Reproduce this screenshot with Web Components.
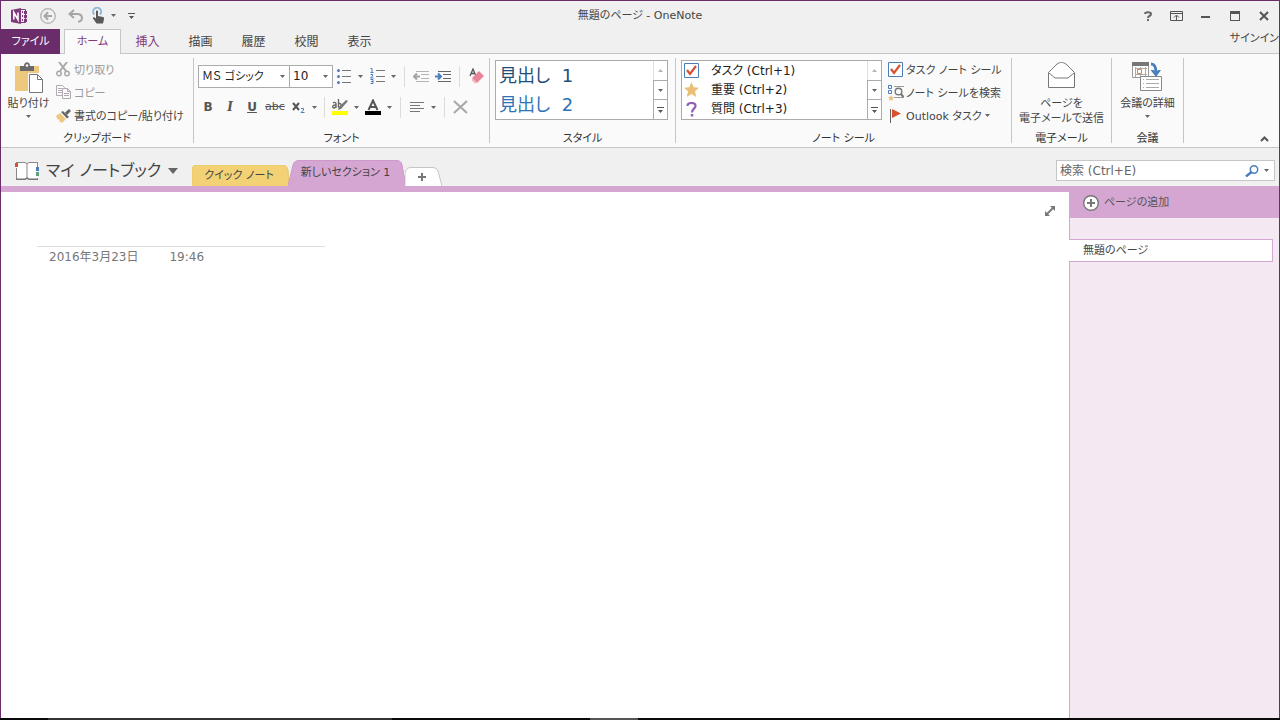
<!DOCTYPE html>
<html lang="ja">
<head>
<meta charset="utf-8">
<title>無題のページ - OneNote</title>
<style>
  html, body { margin: 0; height: 100%; }
  body {
    font: 12px/16px "DejaVu Sans", "Noto Sans CJK JP", sans-serif;
    font-feature-settings: "palt";
    color: #444;
    --accent: #6b2c6b;
    --section: #d5a6d2;
    --line: #c6c6c6;
    --surface: #fafafa;
    --chrome: #f0f0f0;
    --small: 11px;
  }
</style>
</head>
<body>
<note-window></note-window>
<script>
const RESET = `
  * { box-sizing: border-box; }
  button, input, select {
    font: inherit; font-feature-settings: inherit; color: inherit;
    background: none; border: 0; margin: 0; padding: 0; border-radius: 0; outline: 0;
  }
  button { display: flex; align-items: center; white-space: nowrap; }
`;
function define(name, css, html) {
  customElements.define(name, class extends HTMLElement {
    constructor() {
      super();
      this.attachShadow({ mode: 'open' });
    }
    connectedCallback() {
      const body = typeof html === 'function' ? html(this) : html;
      this.shadowRoot.innerHTML = `<style>${RESET}${css}</style>${body}`;
    }
  });
}

/* Each entry: [width, height, markup] */
const ICONS = {
  logo: [17, 16, `<path fill="#80397b" d="M0 2 10 0v16L0 14z"/><path fill="none" stroke="#80397b" d="M10 1.500h4.500v13H10"/><path fill="#80397b" d="M11 3h1v2h-1zM11 7h1v2h-1zM11 11h1v2h-1zM13 3h3v3h-3zM13 7h3v3h-3zM13 11h3v3h-3z"/><path fill="none" stroke="#fff" stroke-width="1.600" d="M2.800 11.500v-7l4.200 7v-7"/>`],
  back: [16, 16, `<circle cx="8" cy="8" r="7.300" fill="none" stroke="#b1b1b1" stroke-width="1.300"/><path fill="none" stroke="#a6a6a6" stroke-width="2" d="M4.500 8H12M8 4.300 4.500 8 8 11.700"/>`],
  undo: [15, 14, `<path fill="none" stroke="#a6a6a6" stroke-width="2" d="M6 1 1.500 5 6 9M2 5h7c3 0 5 1.700 5 4s-1.500 3.500-4 3.800"/>`],
  touch: [13, 17, `<path fill="none" stroke="#8db7d9" stroke-width="2" d="M2.200 7.500A4 4 0 1 1 8 7.500"/><path fill="#595959" d="M4 4.500c0-1.300 2-1.300 2 0V9l5 1c1 .3 1.200 1 1 2l-1 4.500H4.500L1 11.500c-.5-1 .5-1.600 1.500-1L4 11.500z"/>`],
  caret: [5, 3, `<path fill="#666" d="M0 0h5L2.500 3z"/>`],
  bigcaret: [10, 6, `<path fill="#666" d="M0 0h10L5 6z"/>`],
  up: [5, 3, `<path fill="#b5b5b5" d="M0 3h5L2.500 0z"/>`],
  more: [7, 6, `<path fill="#555" d="M0 0h7v1H0zM1 3h5L3.500 6z"/>`],
  help: [8, 10, `<path fill="none" stroke="#666" stroke-width="2" d="M1 3C1 .500 7 .500 7 3S4 4.500 4 7"/><path fill="#666" d="M3 8h2v2H3z"/>`],
  ribbonopt: [13, 10, `<path fill="none" stroke="#555" d="M.5.5h12v9H.5zM0 2.500h13M6.500 9V5M4 6.500l2.500-2.500L9 6.500"/>`],
  minimize: [9, 10, `<path fill="#555" d="M0 5h9v2H0z"/>`],
  maximize: [10, 10, `<path fill="#555" d="M0 0h10v10H0zM1 3v6h8V3z" fill-rule="evenodd"/>`],
  close: [10, 10, `<path fill="none" stroke="#555" stroke-width="2" d="m1 1 8 8M9 1 1 9"/>`],
  paste: [30, 32, `<path fill="#edc87e" d="M1 4h24v25H1z"/><path fill="#fafafa" d="M14 11h12v18H14z"/><path fill="#6a6a6a" d="M6 4h4c0-5 6-5 6 0h4v5H6z"/><circle cx="13" cy="3.500" r="1.300" fill="#fafafa"/><path fill="#fff" stroke="#777" d="M15.500 12.500h8l5 5v13h-13zM23.500 12.500v5h5"/>`],
  cut: [14, 15, `<path fill="none" stroke="#a9a9a9" stroke-width="2" d="m3 0 7 9M11 0 4 9"/><circle cx="3" cy="11.500" r="2.300" fill="none" stroke="#a9a9a9" stroke-width="1.400"/><circle cx="11" cy="11.500" r="2.300" fill="none" stroke="#a9a9a9" stroke-width="1.400"/>`],
  copy: [16, 15, `<path fill="#fafafa" stroke="#b3a9b4" d="M.5.500h6l2 2v8h-8zM2 3.500h4M2 5.500h4M2 7.500h4"/><path fill="#fafafa" stroke="#b3a9b4" d="M6.500 3.500h5l3 3v7h-8zM11.500 3.500v3h3M8 8.500h5M8 10.500h5"/>`],
  painter: [16, 14, `<path fill="#edc87e" d="m0 7 4-3 6 6-4 4-3-2 1-2-2 1z"/><path fill="#666" d="m5 3 2-1 6 6-2 1.500zM9 3.500 13 0l2 2-4 4z"/>`],
  bullets: [14, 15, `<g fill="#4a7ebb"><circle cx="1.500" cy="1.500" r="1.500"/><circle cx="1.500" cy="7.500" r="1.500"/><circle cx="1.500" cy="13.500" r="1.500"/></g><path stroke="#777" d="M5 1.500h9M5 7.500h9M5 13.500h9"/>`],
  numbers: [15, 16, `<path stroke="#777" d="M6 2.500h9M6 8.500h9M6 13.500h9"/><path fill="none" stroke="#4a7ebb" d="M.5.500H2V4M.5 4.500h3M.5 6.500h2v1.500l-2 2h3M.5 11.500h2.500v4H.5M1 13.500h2"/>`],
  outdent: [16, 11, `<path stroke="#b5b5b5" d="M3 .500h13M8 3.500h8M8 7.500h8M3 10.500h13"/><path fill="none" stroke="#a5a5a5" stroke-width="2" d="M7 5.500H1M4 2.500l-3 3 3 3"/>`],
  indent: [16, 11, `<path stroke="#666" d="M3 .500h13M8 3.500h8M8 7.500h8M3 10.500h13"/><path fill="none" stroke="#4a7ebb" stroke-width="2" d="M0 5.500h6M3 2.500l3 3-3 3"/>`],
  eraser: [15, 16, `<path fill="none" stroke="#555" stroke-width="1.300" d="m1 8 3-7 2.500 6M2 5.500h4"/><path fill="#e8839a" d="m3 10 7-7 5 5-7 7z"/><path fill="#f3b4c1" d="m3 10 5 5-2 .5-3-3z"/>`],
  subscript: [13, 12, `<path fill="none" stroke="#555" stroke-width="2" d="m1 2 6 7M7 2 1 9"/><path fill="none" stroke="#4a7ebb" d="M9 7.500h2.500V9L9 11.500h3.500"/>`],
  highlight: [17, 16, `<path fill="none" stroke="#666" stroke-width="1.400" d="M1 4c1-1 3-1 3 1v4M4 6c-4-.5-4 3-2 3l2-1M6.500 0v8.500M6.500 5c3-2 4 3.500 0 3.500"/><path fill="#777" d="m14 1 2 1-7 8-3 1 1-3z"/><path fill="#ff0" d="M0 12h16v4H0z"/>`],
  fontcolor: [16, 16, `<path fill="none" stroke="#555" stroke-width="2" d="M3.500 11 8 1.500 12.500 11M5 8h6"/><path d="M0 12h16v4H0z"/>`],
  align: [14, 11, `<path stroke="#777" d="M0 .500h14M0 3.500h10M0 6.500h14M0 9.500h10"/>`],
  remove: [16, 14, `<path fill="none" stroke="#aaa" stroke-width="2.200" d="m1 1 13 12M14 1 1 13"/>`],
  check: [15, 15, `<path fill="#fff" stroke="#4a7ebb" d="M.5.500h14v14H.5z"/><path fill="none" stroke="#d8512f" stroke-width="2.200" d="m3 7 3 4 6-8"/>`],
  star: [15, 15, `<path fill="#e9bf78" d="m7.500 0 2.200 5.200 5.300.5-4 3.600 1.200 5.700-4.700-3-4.700 3L4 9.300 0 5.700l5.300-.5z"/>`],
  question: [15, 15, `<path fill="none" stroke="#8f60b5" stroke-width="2.200" d="M3.500 4c0-4 8-4 8 0 0 2.500-3.500 3-3.500 6.500"/><path fill="#8f60b5" d="M6.800 12h2.500v2.500H6.800z"/>`],
  find: [16, 16, `<path fill="#fafafa" stroke="#4a7ebb" d="M.5.500h3v3h-3zM.5 5.500h3v3h-3z"/><path stroke="#999" d="M6 1.500h10M6 12.500h10"/><circle cx="10.500" cy="6.500" r="3.300" fill="#fafafa" stroke="#777" stroke-width="1.400"/><path stroke="#777" stroke-width="2" d="m13 9 2.500 3"/><path fill="#e9bf78" d="m3 10 1 2h2l-1.500 1.500L5 16l-2-1.300L1 16l.5-2.500L0 12h2z"/>`],
  flag: [15, 14, `<path stroke="#666" d="M2.500 0v14"/><path fill="#d8512f" d="m4 0 9 4.500L4 9z"/>`],
  mail: [27, 26, `<path fill="#fff" stroke="#777" d="M.5 10.500 9 2c3-2 6-2 9 0l8.500 8.500v15H.5z"/><path fill="none" stroke="#777" d="m1 11 6 5h13l6-5"/>`],
  meeting: [31, 30, `<path fill="#fff" stroke="#999" d="M.5.500h16v15H.5z"/><path fill="#777" d="M0 0h17v4H0z"/><path stroke="#aaa" fill="none" d="M3 6.500h12M3 12.500h12M3.500 5v10M13.500 5v10M8.500 5v2M8.500 12v3"/><path fill="#fff" stroke="#d98444" d="M5.500 7.500h4v4h-4z"/><path fill="#fff" stroke="#888" d="M8.500 14.500h21v14h-21z"/><path stroke="#aaa" d="M14 17.500h13M14 21.500h13M14 25.500h13M11 17.500h1M11 21.500h1M11 25.500h1"/><path fill="none" stroke="#4a7ebb" stroke-width="3" d="M19 2c4 0 5 3 5 9"/><path fill="#4a7ebb" d="M18.500 8h3l2.500 2.500L26 8h3l-5 7z"/>`],
  collapse: [9, 6, `<path fill="none" stroke="#555" stroke-width="2" d="m1 5 3.500-3.500L8 5"/>`],
  book: [24, 20, `<path fill="#fff" d="M1 1h22v17H1z"/><path fill="none" stroke="#888" d="M1 1.500h9l2 1 2-1h8M1.500 7v11.500M22.500 1v5M12 2v15M22.500 17v1.500"/><path fill="none" stroke="#777" stroke-width="1.500" d="M1 18.200h9l2-1 2 1h9"/><path fill="#d8512f" d="M0 2h3v4H0z"/><path fill="#4a7ebb" d="M21 6h3v4h-3z"/><path fill="#5fa080" d="M21 11h3v4h-3z"/>`],
  plus: [8, 8, `<path stroke="#777" stroke-width="2" d="M4 0v8M0 4h8"/>`],
  search: [14, 12, `<circle cx="9" cy="4.500" r="3.700" fill="none" stroke="#4a7ebb" stroke-width="1.500"/><path stroke="#4a7ebb" stroke-width="2.400" d="m6.500 7-5.500 4.500"/>`],
  add: [16, 16, `<circle cx="8" cy="8" r="7.300" fill="#fff" stroke="#777" stroke-width="1.400"/><path stroke="#777" stroke-width="2" d="M8 4v8M4 8h8"/>`],
  expand: [12, 12, `<path stroke="#777" stroke-width="1.800" d="m2 10 8-8"/><path fill="#777" d="M6 1h5v5L9 4 8 3zM1 6v5h5L4 9 3 8z"/>`]
};
define('ui-icon', `:host { display: inline-flex; flex: none; } svg { display: block; }`, el => {
  const [w, h, art] = ICONS[el.getAttribute('name')];
  return `<svg width="${w}" height="${h}" viewBox="0 0 ${w} ${h}" aria-hidden="true">${art}</svg>`;
});

define('title-bar', `
  :host { display: grid; grid-template-columns: 1fr auto 1fr; align-items: center; height: 29px; margin-bottom: -1px; flex: none; }
  .quick { display: flex; align-items: center; gap: 12px; padding-left: 10px; }
  .touch { gap: 6px; margin-left: -3px; }
  .name { font-size: var(--small); }
  .window { display: flex; justify-content: flex-end; padding-right: 1px; }
  .window button { width: 29px; height: 28px; justify-content: center; }
`, `
  <div class="quick">
    <ui-icon name="logo"></ui-icon>
    <button aria-label="戻る"><ui-icon name="back"></ui-icon></button>
    <button aria-label="元に戻す"><ui-icon name="undo"></ui-icon></button>
    <button class="touch" aria-label="タッチ モード"><ui-icon name="touch"></ui-icon><ui-icon name="caret"></ui-icon></button>
    <button aria-label="カスタマイズ"><ui-icon name="more"></ui-icon></button>
  </div>
  <div class="name">無題のページ - OneNote</div>
  <div class="window">
    <button aria-label="ヘルプ"><ui-icon name="help"></ui-icon></button>
    <button aria-label="リボンの表示オプション"><ui-icon name="ribbonopt"></ui-icon></button>
    <button aria-label="最小化"><ui-icon name="minimize"></ui-icon></button>
    <button aria-label="最大化"><ui-icon name="maximize"></ui-icon></button>
    <button aria-label="閉じる"><ui-icon name="close"></ui-icon></button>
  </div>`);

define('ribbon-tabs', `
  :host { display: flex; height: 25px; flex: none; box-shadow: inset 0 -1px var(--line); }
  button { width: 53px; justify-content: center; }
  .file { width: 59px; margin-right: 4px; background: var(--accent); color: #fff; }
  .on { width: 57px; background: var(--surface); border: 1px solid var(--line); border-bottom: 0; }
  .file, .on, a { font-size: var(--small); }
  .on, .hot { color: #80397b; }
  a { margin-left: auto; color: inherit; text-decoration: none; line-height: 20px; }
`, `
  <button class="file">ファイル</button>
  <button class="on">ホーム</button>
  <button class="hot">挿入</button>
  <button>描画</button>
  <button>履歴</button>
  <button>校閲</button>
  <button>表示</button>
  <a href="#signin">サインイン</a>`);

define('ribbon-group', `
  :host { display: flex; flex-direction: column; flex: none; margin: 4px 0; border-right: 1px solid var(--line); }
  .body { flex: 1; display: flex; min-height: 0; }
  .label { text-align: center; font-size: var(--small); line-height: 8px; color: #333; }
`, el => `<div class="body"><slot></slot></div><div class="label">${el.getAttribute('label')}</div>`);

define('big-button', `
  :host { display: flex; flex: 1; justify-content: center; align-items: flex-start; }
  button { flex-direction: column; padding-top: 4px; width: 100%; }
  .art { height: 34px; display: flex; align-items: flex-start; }
  .text { font-size: var(--small); line-height: 15px; }
  .caret { margin-top: 4px; }
`, el => `<button><span class="art"><ui-icon name="${el.getAttribute('icon')}"></ui-icon></span>
  <span class="text"><slot></slot></span>${el.hasAttribute('menu') ? '<ui-icon class="caret" name="caret"></ui-icon>' : ''}</button>`);

define('row-button', `
  :host { display: flex; height: 23px; font-size: var(--small); }
  :host([disabled]) { color: #999; }
  .art { width: 18px; display: flex; flex: none; }
  .text { padding-top: 2px; }
  .caret { margin-left: 3px; }
`, el => `<button ${el.hasAttribute('disabled') ? 'disabled' : ''}><span class="art"><ui-icon name="${el.getAttribute('icon')}"></ui-icon></span>
  <span class="text"><slot></slot></span>${el.hasAttribute('menu') ? '<ui-icon class="caret" name="caret"></ui-icon>' : ''}</button>`);

define('clipboard-tools', `
  :host { display: flex; flex: 1; }
  .paste { width: 55px; display: flex; }
  .rows { display: flex; flex-direction: column; }
`, `
  <div class="paste"><big-button icon="paste" menu>貼り付け</big-button></div>
  <div class="rows">
    <row-button icon="cut" disabled>切り取り</row-button>
    <row-button icon="copy" disabled>コピー</row-button>
    <row-button icon="painter">書式のコピー/貼り付け</row-button>
  </div>`);

define('font-tools', `
  :host { display: flex; flex-direction: column; flex: 1; padding: 6px 4px 0; }
  .row { display: flex; align-items: center; }
  .row.first { height: 24px; } .row.second { height: 38px; margin-left: -1px; }
  .combo { display: grid; align-items: center; height: 23px; border: 1px solid #ababab; background: #fff; color: #222; }
  .combo.size { margin-left: -1px; }
  .combo > * { grid-area: 1 / 1; }
  .combo ui-icon { justify-self: end; margin-right: 4px; pointer-events: none; }
  select { appearance: none; width: 100%; height: 21px; padding-left: 3px; }
  .name { width: 92px; } .name select { font-size: var(--small); padding-top: 1px; } .size { width: 44px; }
  button { justify-content: center; width: 22px; height: 22px; color: #555; }
  .drop { width: 11px; }
  .wide { width: 24px; }
  i.sep { width: 1px; height: 21px; background: #dcdcdc; margin: 0 5px; }
  .second i.sep { margin: 0 4px; }
  .second i.sep ~ i.sep { margin: 0 5px; }
  .b { font-weight: bold; } .i { font-style: italic; font-family: "DejaVu Serif", serif; font-weight: bold; }
  .u { text-decoration: underline; font-weight: bold; } .s { text-decoration: line-through; font-size: var(--small); }
`, `
  <div class="row first">
    <label class="combo name"><select aria-label="フォント"><option>ＭＳ ゴシック</option></select><ui-icon name="caret"></ui-icon></label>
    <label class="combo size"><select aria-label="フォント サイズ"><option>10</option></select><ui-icon name="caret"></ui-icon></label>
    <button aria-label="箇条書き"><ui-icon name="bullets"></ui-icon></button><button class="drop" aria-label="箇条書きの種類"><ui-icon name="caret"></ui-icon></button>
    <button aria-label="段落番号"><ui-icon name="numbers"></ui-icon></button><button class="drop" aria-label="番号の種類"><ui-icon name="caret"></ui-icon></button>
    <i class="sep"></i>
    <button aria-label="インデント解除"><ui-icon name="outdent"></ui-icon></button>
    <button aria-label="インデント"><ui-icon name="indent"></ui-icon></button>
    <i class="sep"></i>
    <button aria-label="書式のクリア"><ui-icon name="eraser"></ui-icon></button>
  </div>
  <div class="row second">
    <button class="b">B</button><button class="i">I</button><button class="u">U</button><button class="wide s">abc</button>
    <button aria-label="下付き"><ui-icon name="subscript"></ui-icon></button><button class="drop" aria-label="上付きと下付き"><ui-icon name="caret"></ui-icon></button>
    <i class="sep"></i>
    <button aria-label="蛍光ペン"><ui-icon name="highlight"></ui-icon></button><button class="drop" aria-label="蛍光ペンの色"><ui-icon name="caret"></ui-icon></button>
    <button aria-label="フォントの色"><ui-icon name="fontcolor"></ui-icon></button><button class="drop" aria-label="色の選択"><ui-icon name="caret"></ui-icon></button>
    <i class="sep"></i>
    <button aria-label="配置"><ui-icon name="align"></ui-icon></button><button class="drop" aria-label="配置の種類"><ui-icon name="caret"></ui-icon></button>
    <i class="sep"></i>
    <button aria-label="削除"><ui-icon name="remove"></ui-icon></button>
  </div>`);

define('gallery-box', `
  :host { display: flex; height: 60px; margin-top: 2px; border: 1px solid #ababab; background: #fff; color: #222; }
  .items { flex: 1; display: flex; flex-direction: column; }
  .scroll { display: flex; flex-direction: column; width: 14px; }
  .scroll button { flex: 1; justify-content: center; border-left: 1px solid #ababab; border-top: 1px solid #ababab; }
  .scroll button:first-child { border-top: 0; border-left-color: #e1e1e1; }
`, `
  <div class="items"><slot></slot></div>
  <div class="scroll">
    <button aria-label="上へ"><ui-icon name="up"></ui-icon></button>
    <button aria-label="下へ"><ui-icon name="caret"></ui-icon></button>
    <button aria-label="その他"><ui-icon name="more"></ui-icon></button>
  </div>`);

define('style-tools', `
  :host { display: flex; flex: 1; align-items: flex-start; padding: 0 7px 0 5px; }
  gallery-box { flex: 1; }
  button { height: 29px; padding-left: 3px; font-size: 18px; line-height: 28px; white-space: pre; color: #2e74b5; }
  .h1 { color: #1f4e79; }
`, `
  <gallery-box>
    <button class="h1">見出し  1</button>
    <button>見出し  2</button>
  </gallery-box>`);

define('tag-tools', `
  :host { display: flex; flex: 1; align-items: flex-start; padding-left: 5px; gap: 6px; }
  gallery-box { width: 201px; }
  gallery-box button { flex: 1; padding-left: 2px; gap: 12px; }
  .rows { display: flex; flex-direction: column; }
`, `
  <gallery-box>
    <button><ui-icon name="check"></ui-icon>タスク (Ctrl+1)</button>
    <button><ui-icon name="star"></ui-icon>重要 (Ctrl+2)</button>
    <button><ui-icon name="question"></ui-icon>質問 (Ctrl+3)</button>
  </gallery-box>
  <div class="rows">
    <row-button icon="check">タスク ノート シール</row-button>
    <row-button icon="find">ノート シールを検索</row-button>
    <row-button icon="flag" menu>Outlook タスク</row-button>
  </div>`);

define('ribbon-bar', `
  :host { display: flex; height: 94px; flex: none; background: var(--surface); border-bottom: 1px solid var(--line); }
  .clip { width: 193px; } .font { width: 296px; } .style { width: 186px; }
  .tags { width: 336px; } .mail { width: 100px; } .meet { width: 72px; }
  .collapse { margin: auto 10px 5px auto; }
`, `
  <ribbon-group class="clip" label="クリップボード"><clipboard-tools></clipboard-tools></ribbon-group>
  <ribbon-group class="font" label="フォント"><font-tools></font-tools></ribbon-group>
  <ribbon-group class="style" label="スタイル"><style-tools></style-tools></ribbon-group>
  <ribbon-group class="tags" label="ノート シール"><tag-tools></tag-tools></ribbon-group>
  <ribbon-group class="mail" label="電子メール"><big-button icon="mail">ページを<br>電子メールで送信</big-button></ribbon-group>
  <ribbon-group class="meet" label="会議"><big-button icon="meeting" menu>会議の詳細</big-button></ribbon-group>
  <button class="collapse" aria-label="リボンを折りたたむ"><ui-icon name="collapse"></ui-icon></button>`);

const TAB_SHAPES = {
  quick: [97, 21, 'M0 21V5Q0 0 5 0H90Q95 0 96 5L97 21', '#f3d275', '#e9c766'],
  active: [118, 26, 'M0 26 5 5Q6 .5 11 .5H109Q113 .5 114 5L118 26', '#d5a6d2', '#cf98cb'],
  add: [37, 19, 'M0 19V6Q1 .5 6 .5H28Q32 .5 33 4L37 19', '#fff', '#c6c6c6']
};
define('section-tab', `
  :host { display: grid; flex: none; font-size: var(--small); }
  svg, button { grid-area: 1 / 1; }
  button { justify-content: center; width: 100%; height: 100%; padding-right: 3px; color: #444; }
`, el => {
  const [w, h, d, fill, stroke] = TAB_SHAPES[el.getAttribute('shape')];
  return `<svg width="${w}" height="${h}" viewBox="0 0 ${w} ${h}" aria-hidden="true"><path d="${d}" fill="${fill}" stroke="${stroke}"/></svg>
  <button aria-label="${el.getAttribute('label') || el.textContent}"><slot></slot></button>`;
});

define('notebook-bar', `
  :host { display: flex; height: 38px; flex: none; align-items: flex-end; padding: 0 4px 0 14px; }
  .book { height: 30px; font-size: 16px; line-height: 24px; gap: 7px; margin-right: 14px; width: 163px; }
  .book ui-icon:last-child { margin-left: auto; }
  section-tab + section-tab { margin-left: -1px; }
  .search { display: flex; align-items: center; width: 219px; height: 21px; margin: 0 0 5px auto; padding: 0 5px 0 3px; border: 1px solid var(--line); background: #fff; }
  input { flex: 1; min-width: 0; height: 19px; }
  input::placeholder { color: #666; opacity: 1; }
  .search button + button { margin-left: 5px; }
`, `
  <button class="book"><ui-icon name="book"></ui-icon><span>マイ ノートブック</span><ui-icon name="bigcaret"></ui-icon></button>
  <section-tab shape="quick">クイック ノート</section-tab>
  <section-tab shape="active">新しいセクション 1</section-tab>
  <section-tab shape="add" label="新しいセクションの作成"><ui-icon name="plus"></ui-icon></section-tab>
  <div class="search">
    <input type="text" aria-label="検索" placeholder="検索 (Ctrl+E)">
    <button aria-label="検索の実行"><ui-icon name="search"></ui-icon></button>
    <button aria-label="検索範囲"><ui-icon name="caret"></ui-icon></button>
  </div>`);

define('note-page', `
  :host { display: flex; flex: 1; justify-content: space-between; align-items: flex-start; background: #fff; color: #777; }
  header { width: 288px; margin: 54px 0 0 36px; border-top: 1px solid #ddd; padding: 2px 0 0 12px; display: flex; gap: 31px; }
  button { margin: 13px 13px 0 0; }
`, `
  <header><span>2016年3月23日</span><span>19:46</span></header>
  <button aria-label="ページ全体を表示"><ui-icon name="expand"></ui-icon></button>`);

define('page-list', `
  :host { display: flex; flex-direction: column; width: 210px; flex: none; background: #f4e8f2; border-left: 1px solid var(--section); font-size: var(--small); }
  .add { height: 26px; padding: 0 0 4px 13px; gap: 5px; background: var(--section); color: #555; }
  .page { height: 23px; margin: 21px 6px 0 -1px; padding-left: 14px; background: #fff; border: 1px solid var(--section); border-left: 0; }
`, `
  <button class="add"><ui-icon name="add"></ui-icon>ページの追加</button>
  <button class="page">無題のページ</button>`);

define('note-window', `
  :host { display: flex; flex-direction: column; height: 100vh; background: var(--chrome); }
  .frame { flex: 1; min-height: 0; display: flex; flex-direction: column; border: 1px solid var(--accent); border-bottom: 0; overflow: hidden; }
  .stripe { height: 6px; flex: none; background: var(--section); }
  main { flex: 1; display: flex; min-height: 0; }
  .task { display: flex; height: 2px; background: #0a0a0a; }
  .task i { background: #333; width: 344px; margin-left: 48px; }
  .task i + i { background: #555; width: 48px; margin-left: 198px; }
`, `
  <div class="frame">
    <title-bar></title-bar>
    <ribbon-tabs></ribbon-tabs>
    <ribbon-bar></ribbon-bar>
    <notebook-bar></notebook-bar>
    <div class="stripe"></div>
    <main><note-page></note-page><page-list></page-list></main>
  </div>
  <div class="task"><i></i><i></i></div>`);
</script>
</body>
</html>
